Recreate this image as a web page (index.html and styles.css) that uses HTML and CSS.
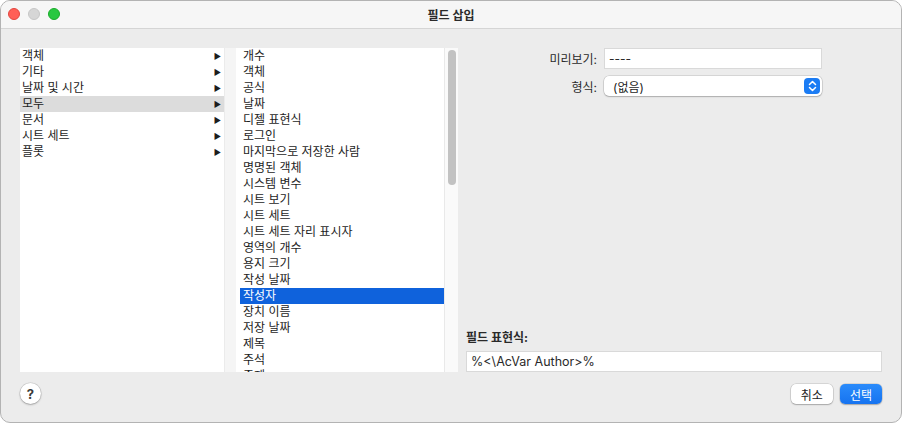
FILE: index.html
```html
<!DOCTYPE html>
<html lang="ko">
<head>
    <meta charset="UTF-8">
    <title>필드 삽입</title>
    <link rel="stylesheet" href="styles.css">
</head>
<body>
    <div class="window">
        <div class="titlebar">
            <div class="lights">
                <span class="light red"></span>
                <span class="light grey"></span>
                <span class="light green"></span>
            </div>
            <div class="title">필드 삽입</div>
        </div>

        <div class="main">
            <div class="browser">
                <ul class="col col-left">
                    <li>객체<span class="arrow">&#9654;</span></li>
                    <li>기타<span class="arrow">&#9654;</span></li>
                    <li>날짜 및 시간<span class="arrow">&#9654;</span></li>
                    <li class="current">모두<span class="arrow">&#9654;</span></li>
                    <li>문서<span class="arrow">&#9654;</span></li>
                    <li>시트 세트<span class="arrow">&#9654;</span></li>
                    <li>플롯<span class="arrow">&#9654;</span></li>
                </ul>
                <div class="col-sep"></div>
                <div class="col-mid">
                    <ul class="col col-fields">
                        <li>개수</li>
                        <li>객체</li>
                        <li>공식</li>
                        <li>날짜</li>
                        <li>디젤 표현식</li>
                        <li>로그인</li>
                        <li>마지막으로 저장한 사람</li>
                        <li>명명된 객체</li>
                        <li>시스템 변수</li>
                        <li>시트 보기</li>
                        <li>시트 세트</li>
                        <li>시트 세트 자리 표시자</li>
                        <li>영역의 개수</li>
                        <li>용지 크기</li>
                        <li>작성 날짜</li>
                        <li class="selected">작성자</li>
                        <li>장치 이름</li>
                        <li>저장 날짜</li>
                        <li>제목</li>
                        <li>주석</li>
                        <li>주제</li>
                    </ul>
                    <div class="scrollbar"><div class="thumb"></div></div>
                </div>
            </div>

            <div class="side">
                <div class="form-row">
                    <label class="form-label">미리보기:</label>
                    <div class="field">----</div>
                </div>
                <div class="form-row second">
                    <label class="form-label">형식:</label>
                    <div class="popup">
                        <span>(없음)</span>
                        <span class="stepper">
                            <svg width="9" height="12" viewBox="0 0 9 12">
                                <path d="M1.5 4.5 L4.5 1.5 L7.5 4.5 M1.5 7.5 L4.5 10.5 L7.5 7.5" fill="none" stroke="#fff" stroke-width="1.5" stroke-linecap="round" stroke-linejoin="round"/>
                            </svg>
                        </span>
                    </div>
                </div>

                <div class="expr">
                    <div class="expr-label">필드 표현식:</div>
                    <div class="field wide">%&lt;\AcVar Author&gt;%</div>
                </div>
            </div>
        </div>

        <div class="footer">
            <button class="help">?</button>
            <div class="actions">
                <button class="btn">취소</button>
                <button class="btn primary">선택</button>
            </div>
        </div>
    </div>
</body>
</html>
```

FILE: styles.css
```css
body {
    margin: 0;
    background: #ffffff;
    font-family: "Inter", "Noto Sans CJK KR", sans-serif;
    font-size: 12px;
    color: #1d1d1d;
}

.window {
    width: 902px;
    height: 423px;
    box-sizing: border-box;
    border: 1px solid #b3b3b3;
    border-radius: 10px;
    background: #ececec;
    overflow: hidden;
    display: flex;
    flex-direction: column;
}

/* заголовок окна */
.titlebar {
    height: 28px;
    box-sizing: border-box;
    background: #f6f6f6;
    border-bottom: 1px solid #d5d5d5;
    position: relative;
    display: flex;
    align-items: center;
    justify-content: center;
}

.lights {
    position: absolute;
    left: 7px;
    top: 7px;
    display: flex;
    gap: 8px;
}

.light {
    width: 12px;
    height: 12px;
    border-radius: 50%;
    box-sizing: border-box;
}

.red   { background: #ff5f57; border: 1px solid #e2463f; }
.grey  { background: #d6d6d6; border: 1px solid #c6c6c6; }
.green { background: #28c840; border: 1px solid #1aab29; }

.title {
    font-weight: bold;
    font-size: 12px;
    color: #2b2b2b;
}

/* основная часть */
.main {
    display: flex;
    padding: 19px 0 0 19px;
    height: 324px;
}

.browser {
    display: flex;
    width: 438px;
    height: 324px;
}

.col {
    list-style: none;
    margin: 0;
    padding: 0;
    background: #fff;
    overflow: hidden;
}

.col li {
    height: 16px;
    line-height: 16px;
    padding-left: 2px;
    white-space: nowrap;
    position: relative;
}

.col-left {
    width: 204px;
}

.col-left .current {
    background: #dcdcdc;
}

.arrow {
    position: absolute;
    right: 3px;
    top: 0;
    font-size: 8px;
    color: #1d1d1d;
}

.col-sep {
    width: 12px;
    background: #f5f5f5;
    border-left: 1px solid #ebebeb;
    box-sizing: border-box;
}

.col-mid {
    display: flex;
    width: 222px;
    background: #fff;
}

.col-fields {
    width: 204px;
    margin-left: 4px;
}

.col-fields li {
    padding-left: 3px;
}

.col-fields .selected {
    background: #0f62dc;
    color: #fff;
}

.scrollbar {
    width: 14px;
    box-sizing: border-box;
    background: #fafafa;
    border-left: 1px solid #e9e9e9;
    padding: 2px 0 0 3px;
}

.thumb {
    width: 8px;
    height: 135px;
    border-radius: 4px;
    background: #c2c2c2;
}

/* правая панель */
.side {
    width: 416px;
    margin-left: 8px;
    display: flex;
    flex-direction: column;
}

.form-row {
    display: flex;
    align-items: center;
    height: 20px;
}

.form-row.second {
    margin-top: 8px;
}

.form-label {
    width: 138px;
    text-align: right;
    padding-right: 7px;
    box-sizing: border-box;
    color: #2a2a2a;
}

.field {
    width: 218px;
    height: 21px;
    box-sizing: border-box;
    background: #fff;
    border: 1px solid #d9d9d9;
    padding: 0 4px;
    line-height: 19px;
    color: #2a2a2a;
}

.popup {
    width: 218px;
    height: 20px;
    box-sizing: border-box;
    background: #fff;
    border-radius: 5px;
    box-shadow: 0 0 0 0.5px rgba(0, 0, 0, 0.18), 0 1px 1.5px rgba(0, 0, 0, 0.2);
    display: flex;
    align-items: center;
    justify-content: space-between;
    padding: 0 2px 0 9px;
}

.stepper {
    width: 16px;
    height: 16px;
    border-radius: 4px;
    background: #1b7cf4;
    display: flex;
    align-items: center;
    justify-content: center;
}

.expr {
    margin-top: auto;
}

.expr-label {
    font-weight: bold;
    color: #2a2a2a;
    margin-bottom: 6px;
}

.field.wide {
    width: 416px;
    font-size: 12.5px;
}

/* нижняя панель */
.footer {
    flex: 1;
    display: flex;
    align-items: flex-start;
    justify-content: space-between;
    padding: 11px 19px 0 19px;
}

.help {
    width: 21px;
    height: 21px;
    border-radius: 50%;
    border: none;
    background: #fff;
    box-shadow: 0 0 0 0.5px rgba(0, 0, 0, 0.15), 0 1px 2px rgba(0, 0, 0, 0.25);
    font-family: "Inter", sans-serif;
    font-weight: bold;
    font-size: 13px;
    color: #3a3a3a;
    padding: 0;
}

.actions {
    display: flex;
    gap: 7px;
    margin-top: 1px;
}

.btn {
    height: 20px;
    padding: 0 10px;
    border: none;
    border-radius: 5px;
    background: #fff;
    box-shadow: 0 0 0 0.5px rgba(0, 0, 0, 0.18), 0 1px 1.5px rgba(0, 0, 0, 0.22);
    font-family: "Noto Sans CJK KR", sans-serif;
    font-size: 12px;
    color: #1d1d1d;
}

.btn.primary {
    background: linear-gradient(#2a8bfb, #1673f0);
    color: #fff;
}
```
